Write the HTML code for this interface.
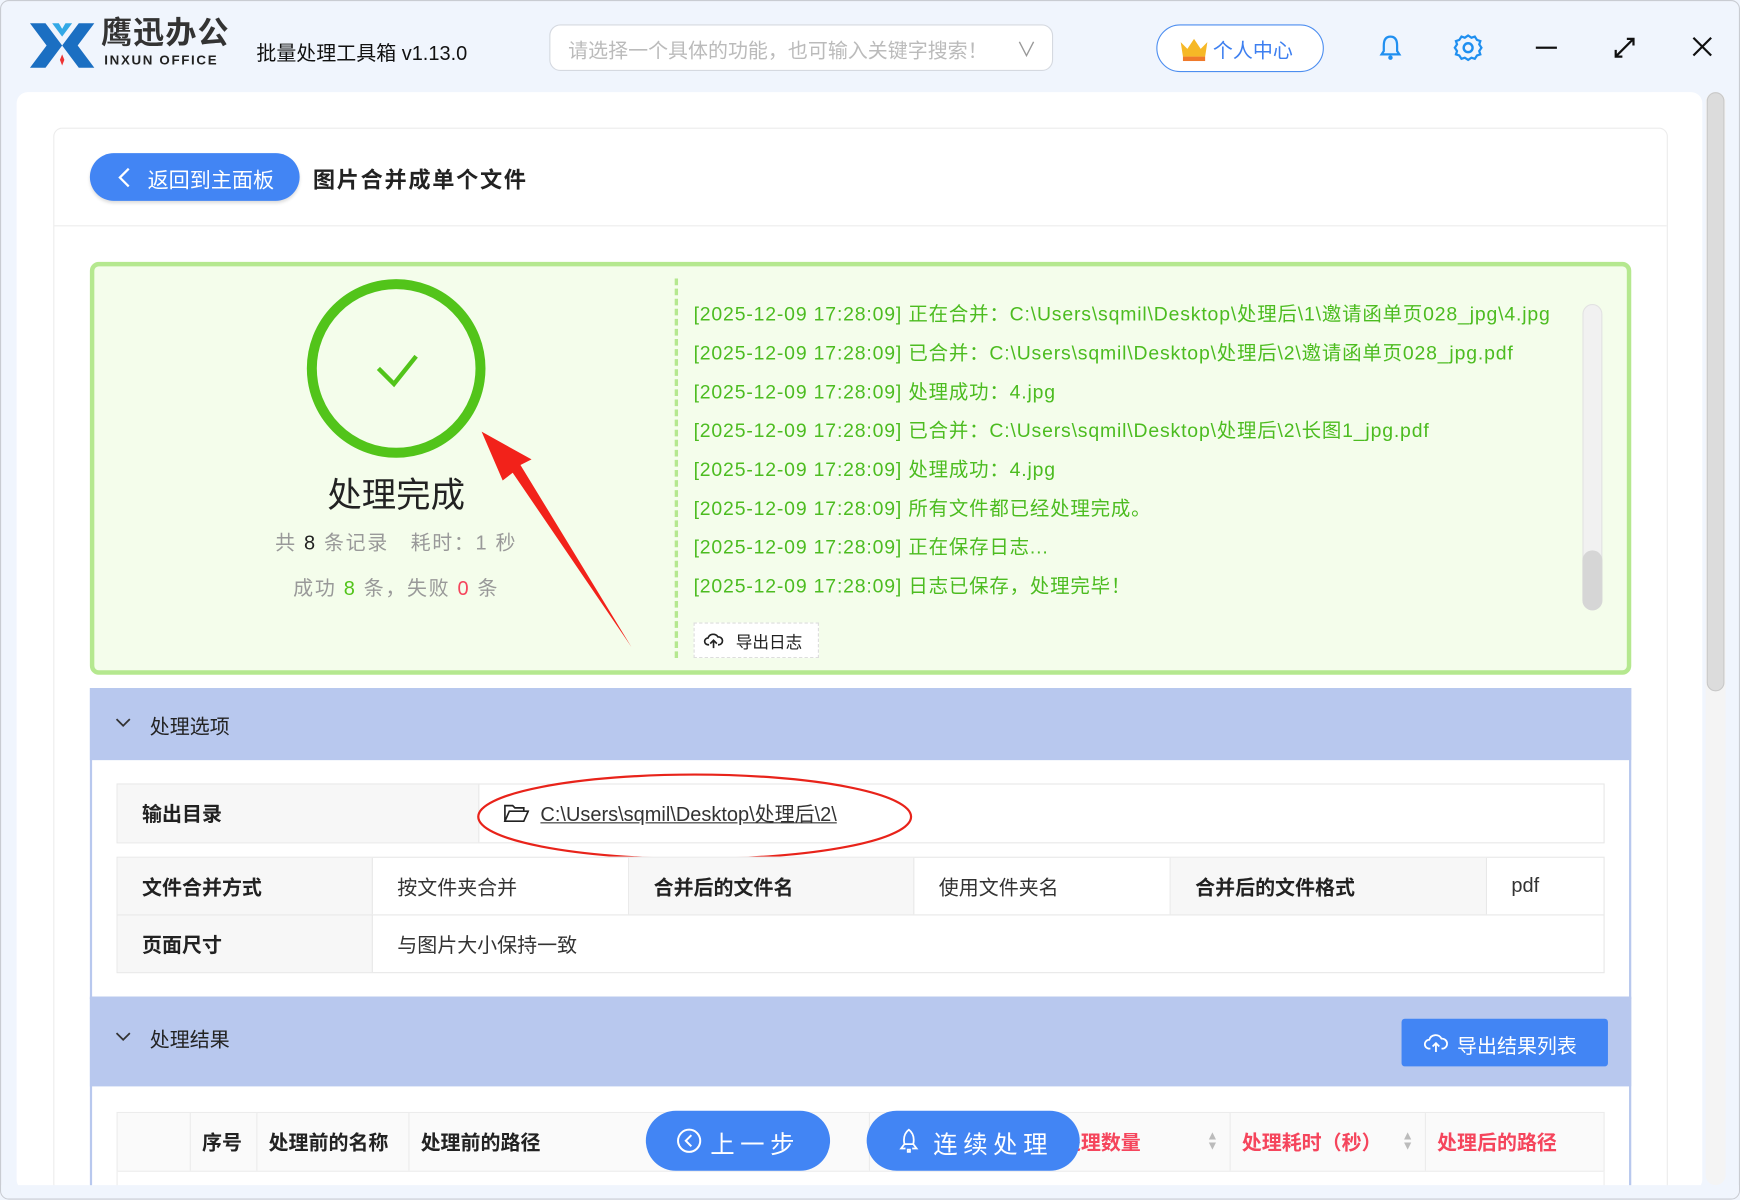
<!DOCTYPE html>
<html><head><meta charset="utf-8">
<style>
*{box-sizing:border-box;margin:0;padding:0}
html,body{width:1740px;height:1200px;overflow:hidden;background:#f0f5fd}
body{font-family:"Liberation Sans","Noto Sans CJK SC",sans-serif;}
#w{position:absolute;left:0;top:0;width:1568px;height:1081px;transform:scale(1.1097);transform-origin:0 0;background:#f0f5fd;border:1px solid #c9ccd2;border-radius:8px;overflow:hidden}
.a{position:absolute}
.log{position:absolute;left:624px;font-size:17.5px;letter-spacing:0.75px;color:#4cbc20;white-space:nowrap}
.cell{position:absolute;height:100%;top:0;display:flex;align-items:center;padding-left:22px;font-size:18px;color:#333;border-right:1px solid #e8e8e8}
.lab{background:#f7f7f7;font-weight:bold;color:#222}
.row{position:absolute;left:104px;width:1341px;border:1px solid #e8e8e8;background:#fff}
.th{position:absolute;top:0;height:100%;display:flex;align-items:center;font-size:18px;font-weight:bold;color:#222;border-right:1px solid #ececec;padding-left:10px}
</style></head><body>
<div id="w">
<svg class="a" style="left:24px;top:18px" width="62" height="44" viewBox="0 0 62 44">
<polygon points="2,2 16,2 31,22 16,42 2,42 17,22" fill="#1b6fc2"/>
<polygon points="60,2 46,2 31,22 46,42 60,42 45,22" fill="#1b6fc2"/>
<polygon points="22,2 31,14 40,2 34,2 31,7 28,2" fill="#33a9e6"/>
<polygon points="31,30 33,35 31,40 29,35" fill="#e33"/>
</svg>
<div class="a" style="left:90px;top:14px;font-size:28px;line-height:30px;font-weight:bold;color:#333;letter-spacing:1px">鹰迅办公</div>
<div class="a" style="left:93px;top:46px;font-size:12px;line-height:14px;font-weight:bold;color:#222;letter-spacing:1.5px">INXUN OFFICE</div>
<div class="a" style="left:230px;top:33px;font-size:18px;color:#111">批量处理工具箱 v1.13.0</div>
<div class="a" style="left:494px;top:21px;width:454px;height:42px;border:1px solid #d5d9e0;border-radius:10px;background:#fff;font-size:18px;color:#bbb;padding:9px 16px">请选择一个具体的功能，也可输入关键字搜索！<span style="position:absolute;right:14px;top:8px;color:#999">∨</span></div>
<div class="a" style="left:1041px;top:21px;width:151px;height:43px;border:1px solid #4d8ef0;border-radius:22px;background:#fff;font-size:18px;color:#3d7ff0;padding:9px 0 0 50px">个人中心</div>
<svg class="a" style="left:1061px;top:31px" width="28" height="24" viewBox="0 0 28 24"><polygon points="2,6 8,12 14,3 20,12 26,6 24,19 4,19" fill="#f6b826"/><rect x="4" y="19" width="20" height="4" fill="#f07a2a"/></svg>
<svg class="a" style="left:1240px;top:29px" width="24" height="26" viewBox="0 0 24 26"><path d="M12 3C7 3 6 7 6 11v5l-2 3h16l-2-3v-5c0-4-1-8-6-8z" fill="#e6f2ff" stroke="#1f8ff0" stroke-width="2"/><circle cx="12" cy="22" r="2" fill="#1f8ff0"/></svg>
<svg class="a" style="left:1308px;top:28px" width="28" height="28" viewBox="0 0 28 28"><circle cx="14" cy="14" r="4" fill="none" stroke="#1f8ff0" stroke-width="2.2"/><path d="M14 3l3 2 3-1 2 3 3 1-1 3 2 3-2 3 1 3-3 1-2 3-3-1-3 2-3-2-3 1-2-3-3-1 1-3-2-3 2-3-1-3 3-1 2-3 3 1z" fill="none" stroke="#1f8ff0" stroke-width="2"/></svg>
<div class="a" style="left:1383px;top:41px;width:19px;height:2px;background:#111"></div>
<svg class="a" style="left:1452px;top:31px" width="22" height="22" viewBox="0 0 22 22"><path d="M3 19L19 3M13 3h6v6M3 13v6h6" fill="none" stroke="#111" stroke-width="2"/></svg>
<svg class="a" style="left:1523px;top:31px" width="20" height="20" viewBox="0 0 20 20"><path d="M2 2L18 18M18 2L2 18" stroke="#111" stroke-width="2"/></svg>
<div class="a" style="left:14px;top:82px;width:1519px;height:990px;background:#fff;border-radius:10px"></div>
<div class="a" style="left:1536px;top:82px;width:18px;height:985px;background:#f4f4f4;border-radius:9px"></div>
<div class="a" style="left:1537px;top:82px;width:16px;height:540px;background:#dcdcdc;border-radius:8px;border:1px solid #c8c8c8"></div>
<div class="a" style="left:47px;top:114px;width:1455px;height:960px;border:1px solid #ececec;border-radius:8px;background:#fff"></div>
<div class="a" style="left:80px;top:137px;width:189px;height:43px;background:#4285f4;border-radius:22px;color:#fff;font-size:19px;padding:10px 0 0 52px;box-shadow:0 2px 3px #ddd">返回到主面板</div>
<svg class="a" style="left:104px;top:149px" width="14" height="20" viewBox="0 0 14 20"><path d="M11 2L3 10l8 8" fill="none" stroke="#fff" stroke-width="2"/></svg>
<div class="a" style="left:281px;top:145px;font-size:20px;font-weight:bold;color:#222;letter-spacing:1.5px">图片合并成单个文件</div>
<div class="a" style="left:48px;top:202px;width:1453px;height:1px;background:#ececec"></div>
<div class="a" style="left:80px;top:235px;width:1389px;height:372px;background:#f4fdeb;border:4px solid #b5e88f;border-radius:8px"></div>
<svg class="a" style="left:270px;top:245px" width="172" height="172" viewBox="0 0 172 172"><circle cx="86" cy="86" r="76" fill="none" stroke="#52c41a" stroke-width="9"/><path d="M70 86l14 14 20-25" fill="none" stroke="#52c41a" stroke-width="4"/></svg>
<div class="a" style="left:256px;top:420px;width:200px;text-align:center;font-size:31px;color:#222">处理完成</div>
<div class="a" style="left:200px;top:474px;width:312px;text-align:center;font-size:18px;color:#999;white-space:nowrap;letter-spacing:1.5px">共 <b style="color:#222;font-weight:normal">8</b> 条记录&nbsp;&nbsp;&nbsp;耗时：1 秒</div>
<div class="a" style="left:200px;top:515px;width:312px;text-align:center;font-size:18px;color:#999;white-space:nowrap;letter-spacing:1.5px">成功 <span style="color:#52c41a">8</span> 条，失败 <span style="color:#f5455c">0</span> 条</div>
<div class="a" style="left:607px;top:250px;height:342px;border-left:3px dashed #b5e88f"></div>
<div class="log" style="top:269px">[2025-12-09 17:28:09] 正在合并：C:\Users\sqmil\Desktop\处理后\1\邀请函单页028_jpg\4.jpg</div>
<div class="log" style="top:304px">[2025-12-09 17:28:09] 已合并：C:\Users\sqmil\Desktop\处理后\2\邀请函单页028_jpg.pdf</div>
<div class="log" style="top:339px">[2025-12-09 17:28:09] 处理成功：4.jpg</div>
<div class="log" style="top:374px">[2025-12-09 17:28:09] 已合并：C:\Users\sqmil\Desktop\处理后\2\长图1_jpg.pdf</div>
<div class="log" style="top:409px">[2025-12-09 17:28:09] 处理成功：4.jpg</div>
<div class="log" style="top:444px">[2025-12-09 17:28:09] 所有文件都已经处理完成。</div>
<div class="log" style="top:479px">[2025-12-09 17:28:09] 正在保存日志...</div>
<div class="log" style="top:514px">[2025-12-09 17:28:09] 日志已保存，处理完毕！</div>
<div class="a" style="left:1425px;top:273px;width:18px;height:276px;background:#f1f1f1;border:1px solid #e2e2e2;border-radius:9px"></div>
<div class="a" style="left:1425px;top:495px;width:18px;height:54px;background:#d6d6d6;border-radius:9px"></div>
<div class="a" style="left:624px;top:560px;width:113px;height:32px;border:1px dashed #ddd;background:#fff;font-size:15px;color:#222;padding:6px 0 0 37px">导出日志</div>
<svg class="a" style="left:633px;top:568px" width="18" height="16" viewBox="0 0 18 16"><path d="M5 12H4a3 3 0 010-6 5 5 0 019-1 3.5 3.5 0 011 7h-1M9 8v7M6 11l3-3 3 3" fill="none" stroke="#222" stroke-width="1.5"/></svg>
<svg class="a" style="left:420px;top:380px" width="160" height="210" viewBox="0 0 160 210"><polygon points="13,8 58,33 48,38 148,202 41,45 32,52" fill="#f2221a"/></svg>
<div class="a" style="left:80px;top:619px;width:1389px;height:280px;border:2px solid #b8c8ee;border-top:none"></div>
<div class="a" style="left:80px;top:619px;width:1389px;height:65px;background:#b8c8ee"></div>
<svg class="a" style="left:103px;top:645px" width="14" height="10" viewBox="0 0 14 10"><path d="M1 2l6 6 6-6" fill="none" stroke="#333" stroke-width="1.6"/></svg>
<div class="a" style="left:134px;top:640px;font-size:18px;color:#222">处理选项</div>
<div class="row" style="top:705px;height:54px">
<div class="cell lab" style="left:0;width:326px">输出目录</div>
<div class="cell" style="left:326px;border:none;padding-left:55px;text-decoration:underline">C:\Users\sqmil\Desktop\处理后\2\</div>
</div>
<svg class="a" style="left:452px;top:723px" width="24" height="18" viewBox="0 0 24 18"><path d="M2 16V2h7l2 2h8v3M2 16l4-9h17l-4 9z" fill="none" stroke="#222" stroke-width="1.5"/></svg>
<svg class="a" style="left:425px;top:693px" width="400" height="84" viewBox="0 0 400 84"><ellipse cx="200" cy="42" rx="195" ry="38" fill="none" stroke="#e8231a" stroke-width="2"/></svg>
<div class="row" style="top:771px;height:53px">
<div class="cell lab" style="left:0;width:230px">文件合并方式</div>
<div class="cell" style="left:230px;width:231px">按文件夹合并</div>
<div class="cell lab" style="left:461px;width:257px">合并后的文件名</div>
<div class="cell" style="left:718px;width:231px">使用文件夹名</div>
<div class="cell lab" style="left:949px;width:285px">合并后的文件格式</div>
<div class="cell" style="left:1234px;border:none">pdf</div>
</div>
<div class="row" style="top:823px;height:53px">
<div class="cell lab" style="left:0;width:230px">页面尺寸</div>
<div class="cell" style="left:230px;border:none">与图片大小保持一致</div>
</div>
<div class="a" style="left:80px;top:898px;width:1389px;height:180px;border:2px solid #b8c8ee;border-top:none"></div>
<div class="a" style="left:80px;top:898px;width:1389px;height:80px;background:#b8c8ee"></div>
<svg class="a" style="left:103px;top:928px" width="14" height="10" viewBox="0 0 14 10"><path d="M1 2l6 6 6-6" fill="none" stroke="#333" stroke-width="1.6"/></svg>
<div class="a" style="left:134px;top:922px;font-size:18px;color:#222">处理结果</div>
<div class="a" style="left:1262px;top:917px;width:186px;height:43px;background:#4285f4;border-radius:3px;color:#fff;font-size:18px;padding:11px 0 0 50px">导出结果列表</div>
<svg class="a" style="left:1282px;top:930px" width="22" height="18" viewBox="0 0 22 18"><path d="M6 14H5a4 4 0 010-8 6 6 0 0111-1 4 4 0 011 9h-1M11 9v8M8 12l3-3 3 3" fill="none" stroke="#fff" stroke-width="1.6"/></svg>
<div class="a" style="left:104px;top:1001px;width:1341px;height:54px;border:1px solid #ececec;background:#fafafa">
<div class="th" style="left:0;width:66px"></div>
<div class="th" style="left:66px;width:60px">序号</div>
<div class="th" style="left:126px;width:137px">处理前的名称</div>
<div class="th" style="left:263px;width:415px">处理前的路径</div>
<div class="th" style="left:678px;width:162px"></div>
<div class="th" style="left:840px;width:163px;color:#f5455c">处理数量<span style="position:absolute;right:10px;color:#bbb;font-size:11px;line-height:9px">▲<br>▼</span></div>
<div class="th" style="left:1003px;width:176px;color:#f5455c">处理耗时（秒）<span style="position:absolute;right:10px;color:#bbb;font-size:11px;line-height:9px">▲<br>▼</span></div>
<div class="th" style="left:1179px;width:162px;color:#f5455c;border:none">处理后的路径</div>
</div>
<div class="a" style="left:104px;top:1055px;width:1341px;height:14px;border:1px solid #ececec;border-top:none;background:#fff"></div>
<div class="a" style="left:581px;top:1000px;width:166px;height:54px;background:#4285f4;border-radius:27px;color:#fff;font-size:22px;letter-spacing:5px;padding:13px 0 0 58px">上一步</div>
<svg class="a" style="left:608px;top:1015px" width="24" height="24" viewBox="0 0 24 24"><circle cx="12" cy="12" r="10" fill="none" stroke="#fff" stroke-width="1.8"/><path d="M14 7l-5 5 5 5" fill="none" stroke="#fff" stroke-width="1.8"/></svg>
<div class="a" style="left:780px;top:1000px;width:192px;height:54px;background:#4285f4;border-radius:27px;color:#fff;font-size:22px;letter-spacing:5px;padding:13px 0 0 60px">连续处理</div>
<svg class="a" style="left:808px;top:1015px" width="20" height="24" viewBox="0 0 20 24"><path d="M10 2c4 3 5 8 4 13H6C5 10 6 5 10 2zM6 15l-3 4h4M14 15l3 4h-4M9 20h2v2H9z" fill="none" stroke="#fff" stroke-width="1.6"/></svg>
<div class="a" style="left:0;top:1067px;width:1568px;height:14px;background:#f0f5fd"></div>
</div>
</body></html>
